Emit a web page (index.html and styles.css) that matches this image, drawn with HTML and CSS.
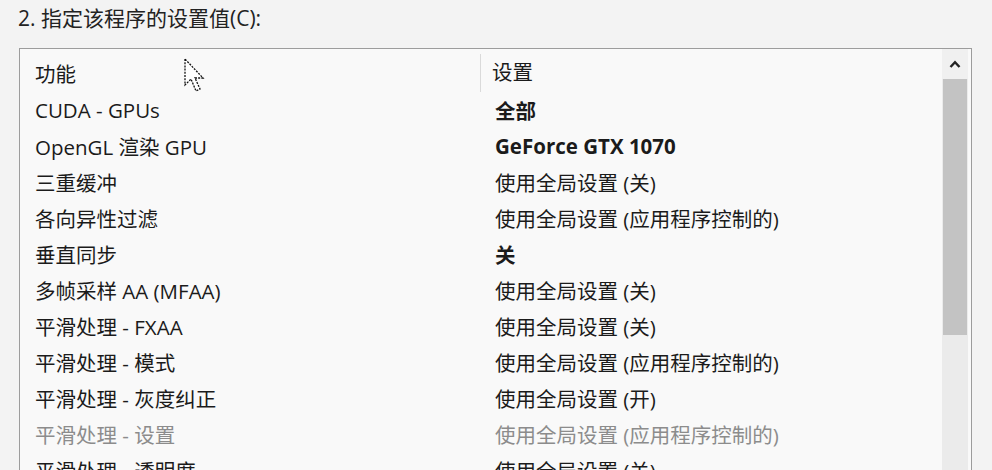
FILE: index.html
```html
<!DOCTYPE html>
<html lang="zh-CN">
<head>
    <meta charset="UTF-8">
    <title>程序设置</title>
    <link rel="stylesheet" href="styles.css">
</head>
<body>

<h2 class="titulo">2. 指定该程序的设置值(C):</h2>

<div class="lista">
    <div class="conteudo">
        <div class="cabecalho">
            <div class="col-func">功能</div>
            <div class="col-set">设置</div>
        </div>
        <div class="linha"><div class="col-func">CUDA - GPUs</div><div class="col-set forte">全部</div></div>
        <div class="linha"><div class="col-func">OpenGL 渲染 GPU</div><div class="col-set forte">GeForce GTX 1070</div></div>
        <div class="linha"><div class="col-func">三重缓冲</div><div class="col-set">使用全局设置 (关)</div></div>
        <div class="linha"><div class="col-func">各向异性过滤</div><div class="col-set">使用全局设置 (应用程序控制的)</div></div>
        <div class="linha"><div class="col-func">垂直同步</div><div class="col-set forte">关</div></div>
        <div class="linha"><div class="col-func">多帧采样 AA (MFAA)</div><div class="col-set">使用全局设置 (关)</div></div>
        <div class="linha"><div class="col-func">平滑处理 - FXAA</div><div class="col-set">使用全局设置 (关)</div></div>
        <div class="linha"><div class="col-func">平滑处理 - 模式</div><div class="col-set">使用全局设置 (应用程序控制的)</div></div>
        <div class="linha"><div class="col-func">平滑处理 - 灰度纠正</div><div class="col-set">使用全局设置 (开)</div></div>
        <div class="linha inativo"><div class="col-func">平滑处理 - 设置</div><div class="col-set">使用全局设置 (应用程序控制的)</div></div>
        <div class="linha"><div class="col-func">平滑处理 - 透明度</div><div class="col-set">使用全局设置 (关)</div></div>
    </div>
    <div class="rolagem">
        <div class="seta">
            <svg width="12" height="8" viewBox="0 0 12 8"><path d="M1.5 7 L6 2.2 L10.5 7" fill="none" stroke="#222" stroke-width="2.4"/></svg>
        </div>
        <div class="barra"></div>
        <div class="trilho"></div>
    </div>
</div>

<svg class="cursor" width="24" height="38" viewBox="0 0 24 38">
    <path d="M1 1 L1 27 L7 21 L12 33 L16 31 L11 20 L19 20 Z" fill="#fff" stroke="#111" stroke-width="1.3" stroke-dasharray="2 1.2"/>
</svg>

</body>
</html>
```

FILE: styles.css
```css
body {
    margin: 0;
    background-color: #f3f3f3;
    font-family: "Open Sans", "Noto Sans CJK SC", sans-serif;
    color: #1b1b1b;
    overflow: hidden;
    height: 470px;
    position: relative;
}
.titulo {
    margin: 0;
    padding: 3px 0 0 18px;
    height: 45px;
    font-size: 21px;
    font-weight: normal;
    line-height: 30px;
    color: #222;
}
.lista {
    margin-left: 19px;
    width: 953px;
    height: 422px;
    border: 1px solid #9c9c9c;
    border-bottom: none;
    background-color: #f9f9f9;
    display: flex;
    box-sizing: border-box;
    overflow: hidden;
}
.conteudo {
    flex: 1;
    font-size: 20.5px;
}
.cabecalho {
    margin-top: 5px;
    height: 38px;
    display: flex;
    align-items: center;
}
.cabecalho .col-set {
    border-left: 1px solid #dadada;
    padding-left: 11px;
    height: 38px;
    line-height: 36px;
}
.linha {
    height: 36px;
    display: flex;
    align-items: center;
}
.col-func {
    width: 460px;
    padding-left: 15px;
    box-sizing: border-box;
}
.col-set {
    flex: 1;
    padding-left: 15px;
    white-space: nowrap;
}
.forte {
    font-weight: bold;
}
.inativo {
    color: #8c8c8c;
}
.rolagem {
    width: 26px;
    margin-right: 3px;
    display: flex;
    flex-direction: column;
    background-color: #ebebeb;
}
.seta {
    height: 30px;
    display: flex;
    align-items: center;
    justify-content: center;
    background-color: #f0f0f0;
}
.barra {
    height: 256px;
    background-color: #c3c3c3;
    margin: 0 1px;
}
.trilho {
    flex: 1;
}
.cursor {
    position: absolute;
    left: 184px;
    top: 58px;
}
```
